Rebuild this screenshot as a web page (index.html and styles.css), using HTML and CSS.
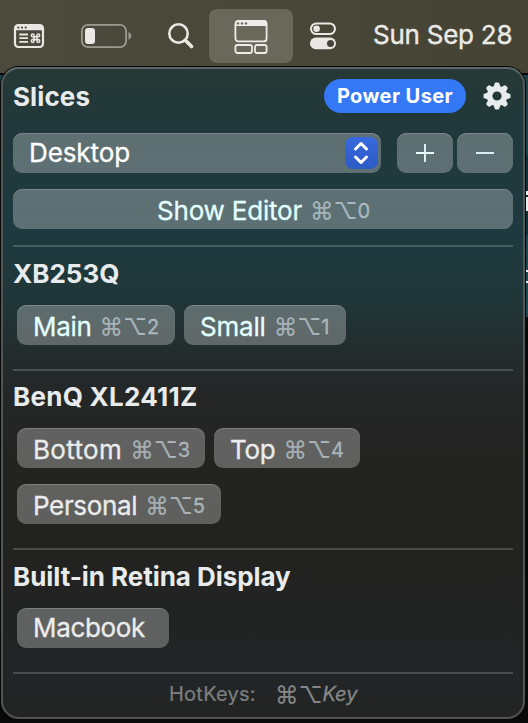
FILE: index.html
```html
<!DOCTYPE html>
<html lang="en">
<head>
<meta charset="utf-8">
<title>Slices</title>
<link rel="stylesheet" href="styles.css">
</head>
<body>
<div class="desktop">
  <header class="menubar">
    <svg class="mb-shortcuts" width="32" height="26" viewBox="0 0 32 26" fill="none">
      <rect x="2" y="2" width="28" height="22" rx="3.2" stroke="#e8e7e3" stroke-width="2.200"/>
      <path d="M2 7.300V4.500Q2 2 4.500 2H27.500Q30 2 30 4.500V7.300Z" fill="#e8e7e3"/>
      <g fill="#4a493b"><circle cx="5.300" cy="4.600" r="1.100"/><circle cx="9" cy="4.600" r="1.100"/><circle cx="12.700" cy="4.600" r="1.100"/></g>
      <path d="M6.300 11.500H15M6.300 15.200H15M6.300 18.900H15" stroke="#e8e7e3" stroke-width="1.800"/>
      <g stroke="#e8e7e3" stroke-width="1.500"><circle cx="19.700" cy="12.400" r="1.400"/><circle cx="25.300" cy="12.400" r="1.400"/><circle cx="19.700" cy="18" r="1.400"/><circle cx="25.300" cy="18" r="1.400"/><path d="M21.100 12.400V18M23.900 12.400V18M19.700 13.800H25.300M19.700 16.600H25.300"/></g>
    </svg>
    <svg class="mb-battery" width="52" height="26" viewBox="0 0 52 26" fill="none">
      <rect x="1.900" y="1.900" width="44.200" height="22.200" rx="6" stroke="#9b9a90" stroke-width="1.800"/>
      <path d="M48.500 9Q51.300 10.200 51.300 13T48.500 17Z" fill="#9b9a90"/>
      <rect x="5" y="5" width="10" height="16" rx="3" fill="#e9e8e4"/>
    </svg>
    <svg class="mb-search" width="28" height="28" viewBox="0 0 28 28" fill="none" stroke="#e9e8e4">
      <circle cx="11.500" cy="11.500" r="9.200" stroke-width="2.600"/>
      <path d="M18.300 18.300L24.600 24.600" stroke-width="3.600" stroke-linecap="round"/>
    </svg>
    <div class="mb-active">
      <svg width="34" height="36" viewBox="0 0 34 36" fill="none" stroke="#ecebe7" stroke-width="1.800">
        <rect x="1.400" y="1.900" width="31.200" height="20.500" rx="3"/>
        <path d="M1 7V4.500Q1 1 4.500 1H29.500Q33 1 33 4.500V7Z" fill="#ecebe7" stroke="none"/>
        <g fill="#66675a" stroke="none"><circle cx="4" cy="4.400" r="1.200"/><circle cx="8" cy="4.400" r="1.200"/><circle cx="12" cy="4.400" r="1.200"/></g>
        <rect x="1.400" y="26" width="16.600" height="8" rx="2"/>
        <rect x="21" y="26" width="11.600" height="8" rx="2"/>
      </svg>
    </div>
    <svg class="mb-control" width="28" height="28" viewBox="0 0 28 28" fill="none">
      <rect x="2" y="1.400" width="24" height="10.600" rx="5.300" stroke="#e9e8e4" stroke-width="2"/>
      <circle cx="7.600" cy="6.700" r="3.300" fill="#e9e8e4"/>
      <rect x="1" y="15.500" width="26" height="11.800" rx="5.900" fill="#e9e8e4"/>
      <circle cx="21.500" cy="21.400" r="3.500" fill="#45443a"/>
    </svg>
    <span class="mb-date">Sun Sep 28</span>
  </header>
  <div class="backdrop"></div>

  <main class="panel">
    <div class="head">
      <h1>Slices</h1>
      <span class="pill">Power User</span>
      <svg class="gear" width="28" height="28" viewBox="-14 -14 28 28">
        <g fill="#e9ecec">
          <path fill-rule="evenodd" d="M0-10.200A10.200 10.200 0 1 1 0 10.200A10.200 10.200 0 1 1 0-10.200ZM0-4.600A4.600 4.600 0 1 0 0 4.600A4.600 4.600 0 1 0 0-4.600Z"/>
          <path id="tooth" d="M-3.500-9L-2.300-12.600Q-2-13.500-1.200-13.500H1.200Q2-13.500 2.300-12.600L3.500-9Z"/>
          <use href="#tooth" transform="rotate(45)"/><use href="#tooth" transform="rotate(90)"/><use href="#tooth" transform="rotate(135)"/><use href="#tooth" transform="rotate(180)"/><use href="#tooth" transform="rotate(225)"/><use href="#tooth" transform="rotate(270)"/><use href="#tooth" transform="rotate(315)"/>
        </g>
      </svg>
    </div>
    <div class="controls">
      <div class="btn select"><span class="t-desktop">Desktop</span>
        <span class="stepper"><svg width="33" height="32" viewBox="0 0 33 32" fill="none" stroke="#fff" stroke-width="3" stroke-linecap="round" stroke-linejoin="round"><path d="M10.500 12L16 6.500L21.500 12M10.500 20L16 25.500L21.500 20"/></svg></span>
      </div>
      <button class="btn square plus" aria-label="Add"><svg width="18" height="18" viewBox="0 0 18 18" stroke="#e6ffff" stroke-width="1.800"><path d="M0 9H18M9 0V18"/></svg></button>
      <button class="btn square" aria-label="Remove"><svg width="18" height="18" viewBox="0 0 18 18" stroke="#e6ffff" stroke-width="1.800"><path d="M0 9H18"/></svg></button>
    </div>
    <button class="btn hot editor tint"><span class="t-editor">Show Editor</span><span class="key"><i>⌘⌥</i>0</span></button>
    <hr>
    <section>
      <h2>XB253Q</h2>
      <div class="slices">
        <button class="btn hot w-main tint"><span class="t-main">Main</span><span class="key"><i>⌘⌥</i>2</span></button>
        <button class="btn hot w-small tint"><span class="t-small">Small</span><span class="key"><i>⌘⌥</i>1</span></button>
      </div>
    </section>
    <hr>
    <section>
      <h2 class="h-benq">BenQ XL2411Z</h2>
      <div class="slices">
        <button class="btn hot w-bottom"><span class="t-bottom">Bottom</span><span class="key"><i>⌘⌥</i>3</span></button>
        <button class="btn hot w-top"><span class="t-top">Top</span><span class="key"><i>⌘⌥</i>4</span></button>
        <button class="btn hot w-personal"><span class="t-personal">Personal</span><span class="key"><i>⌘⌥</i>5</span></button>
      </div>
    </section>
    <hr>
    <section>
      <h2 class="h-built">Built-in Retina Display</h2>
      <div class="slices">
        <button class="btn w-macbook"><span class="t-macbook">Macbook</span></button>
      </div>
    </section>
    <hr>
    <footer class="foot"><span class="t-hot">HotKeys:</span><span class="key"><i>⌘⌥</i><em>Key</em></span></footer>
  </main>
</div>
</body>
</html>
```

FILE: styles.css
```css
* { box-sizing: border-box; }
body { margin: 0; font-family: Inter, "Liberation Sans", sans-serif; background: #0c0d0d; }
svg { display: block; flex: none; }
.desktop { position: relative; width: 528px; height: 723px; overflow: hidden; display: flex; flex-direction: column; }

.menubar { height: 73px; flex: none; display: flex; align-items: flex-start; background: linear-gradient(90deg, #4b4a3c, #484738 50%, #444334); }
.mb-shortcuts { margin: 23px 0 0 13px; }
.mb-battery { margin: 23px 0 0 35px; }
.mb-search { margin: 22px 0 0 35px; }
.mb-active { width: 84px; height: 54px; margin: 9px 0 0 14px; border-radius: 8px; background: #68685b; display: flex; justify-content: center; padding-top: 10px; }
.mb-control { margin: 22px 0 0 16px; }
.mb-date { margin: 18px 0 0 36px; font-size: 26px; line-height: 34px; font-weight: 400; color: #ebeae6; white-space: nowrap; letter-spacing: -.25px; -webkit-text-stroke: .4px; }
/* the strip of the window behind the panel that stays visible at its edge */
.backdrop { flex: 1; border-top: 2px solid #080808; background:
  linear-gradient(#e8eeee, #e8eeee) right 116px / 2px 4px no-repeat,
  linear-gradient(#e8eeee, #e8eeee) right 122px / 2px 14px no-repeat,
  linear-gradient(#e8eeee, #e8eeee) right 195px / 2px 2px no-repeat,
  linear-gradient(#e8eeee, #e8eeee) right 206px / 2px 2px no-repeat,
  linear-gradient(#1d4149 0 80px, #102f39 80px 160px, #1d4851 160px 242px, #090909 242px); }
.backdrop { background-origin: padding-box; }

.panel { position: absolute; left: 1px; top: 67px; width: 524px; height: 652px; border: 2px solid #505352; border-color: #576867 #505654 #505251; border-radius: 18px; padding: 10px 10px 0 10px; box-shadow: 0 0 0 1px #070707;
  background: linear-gradient(#263936 0, #20383b 60px, #1e3a40 160px, #203739 225px, #232c2d 282px, #252727 325px, #232422 390px, #222321 500px, #222527 620px, #232422); }
.head { display: flex; align-items: center; height: 34px; }
h1, h2 { margin: 0; color: #e8ebeb; font-weight: 700; font-size: 26px; line-height: 32px; white-space: nowrap; }
h1 { padding-top: 2px; letter-spacing: .1px; }
.pill { margin-left: auto; width: 142px; height: 34px; border-radius: 17px; background: #3478f6; color: #fff; font-weight: 700; font-size: 20px; line-height: 34px; text-align: center; white-space: nowrap; letter-spacing: .4px; }
.gear { margin: 0 2px 0 17px; }
.controls { display: flex; margin-top: 20px; }
.btn { display: flex; align-items: center; height: 40px; padding: 0 0 0 16px; margin: 0; border: 0; border-radius: 9px; background: rgba(255,255,255,.28); box-shadow: inset 0 1px 0 rgba(255,255,255,.19); color: #ebeceb; font: 400 26px/40px Inter, "Liberation Sans", sans-serif; white-space: nowrap; -webkit-text-stroke: .3px; }
.hot { padding-top: 3px; }
.tint { color: #e3ffff; }
.select { width: 368px; color: #fff; justify-content: space-between; padding-right: 3px; }
.stepper { width: 33px; height: 32px; border-radius: 8px; background: linear-gradient(#3769df, #2d5bc5); }
.square { width: 56px; margin-left: 4px; padding: 0; justify-content: center; }
.plus { margin-left: 16px; }
.editor { width: 500px; margin-top: 16px; padding-left: 144px; }
.key { display: flex; align-items: center; height: 37px; margin-left: 8px; font-size: 20px; color: rgba(215,226,235,.62); -webkit-text-stroke: .3px; }
.key i { font-style: normal; font-size: 23.5px; -webkit-text-stroke: .1px; }
hr { height: 2px; border: 0; margin: 16px 0 0; background: rgba(255,255,255,.18); }
h2 { margin-top: 11px; }
.h-benq { margin-top: 10px; letter-spacing: .27px; }
.h-built { letter-spacing: -.05px; }
.t-desktop { letter-spacing: -.1px; }
.t-editor { letter-spacing: -.2px; }
.t-main { letter-spacing: -.3px; }
.t-small { letter-spacing: -.2px; }
.t-bottom { letter-spacing: .35px; }
.t-top { letter-spacing: -.3px; }
.t-personal { letter-spacing: -.35px; }
.t-macbook { letter-spacing: -.35px; }
.t-hot { letter-spacing: .25px; }
.slices { display: flex; flex-wrap: wrap; gap: 16px 9px; margin: 15px 0 24px 4px; }
.w-main { width: 158px; }
.w-small { width: 162px; }
.w-bottom { width: 188px; }
.w-top { width: 146px; }
.w-personal { width: 204px; }
.w-macbook { width: 152px; }
.foot { display: flex; align-items: center; height: 40px; padding-left: 156px; font-size: 20px; color: #7d7f7f; -webkit-text-stroke: .2px; }
.foot .key { margin-left: 19px; color: #858787; }
```
